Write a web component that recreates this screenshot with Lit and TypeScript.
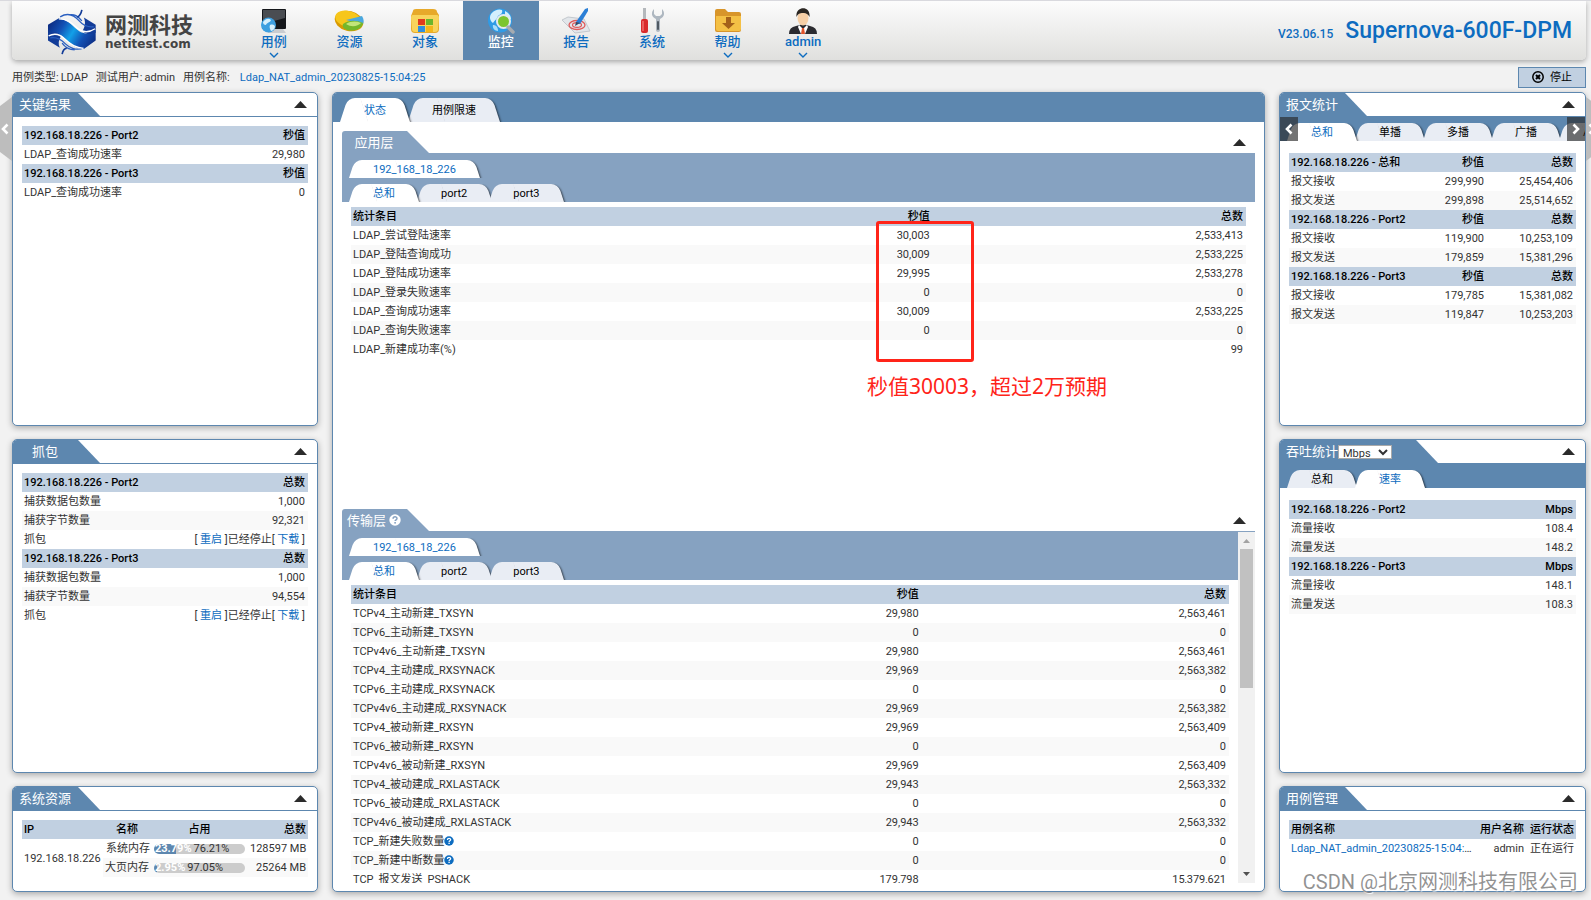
import { LitElement, html, svg, css, nothing, type TemplateResult } from "lit";
import { customElement, property } from "lit/decorators.js";
import { classMap } from "lit/directives/class-map.js";

const reset = css`
  *,
  *::before,
  *::after {
    box-sizing: border-box;
  }
  button {
    font: inherit;
    border: 0;
    margin: 0;
    padding: 0;
    background: none;
    cursor: pointer;
  }
  a {
    color: #0d6cc0;
    text-decoration: none;
  }
`;

/* ---------- icons ---------- */

const chevron = (d: string, w = 10, h = 6) =>
  html`<svg width=${w} height=${h} viewBox="0 0 ${w} ${h}" fill="none" stroke="currentColor" aria-hidden="true">
    ${svg`<path d=${d} stroke-width="1.4"/>`}
  </svg>`;

const arrowLeft = html`<svg width="8" height="12" viewBox="0 0 8 12" fill="none" aria-hidden="true">
  <path d="M6.5 1.5 2 6l4.500 4.500" stroke="#fff" stroke-width="2.600" />
</svg>`;
const arrowRight = html`<svg width="8" height="12" viewBox="0 0 8 12" fill="none" aria-hidden="true">
  <path d="M1.500 1.500 6 6l-4.500 4.500" stroke="#fff" stroke-width="2.600" />
</svg>`;

const help = (size: number, disc: string, mark: string) =>
  html`<svg width=${size} height=${size} viewBox="0 0 12 12" aria-hidden="true">
    <circle cx="6" cy="6" r="5.700" fill=${disc} />
    <path d="M4.100 4.700C4.100 2.200 8 2.300 8 4.500c0 1.300-1.900 1.300-1.900 2.600" fill="none" stroke=${mark} stroke-width="1.500" />
    <rect x="5.300" y="8" width="1.600" height="1.600" fill=${mark} />
  </svg>`;

const logo = html`<svg width="50" height="46" viewBox="140 25 152 138" aria-hidden="true">
  <defs>
    <linearGradient id="lg" x1="0" x2="1" y1="0.300" y2="0.700">
      <stop offset="0" stop-color="#0d2f86" />
      <stop offset="0.250" stop-color="#1250b4" />
      <stop offset="0.500" stop-color="#12a0e8" />
      <stop offset="0.750" stop-color="#1250b4" />
      <stop offset="1" stop-color="#0d2f86" />
    </linearGradient>
  </defs>
  <path d="M143 72 176 52C206 58 220 78 238 92c16 10 34 8 50-4v32l-36 26c-32-4-44-20-62-36-14-12-30-14-47 0z" fill="url(#lg)" />
  <path d="M252 50l36 22v24c-16 8-32 4-40-6 8-12 10-26 4-40zM143 98c18-8 32-2 40 8-8 12-10 24-4 36l-36-22z" fill="#123c98" />
  <path d="M180 48c26-16 44-4 58 12 10 12 22 20 44 18M206 42c18-4 28 4 40 18" fill="none" stroke="#2a5fc0" stroke-width="4" />
  <path d="M246 27c-2 10-4 18-14 22" fill="none" stroke="#123c98" stroke-width="5" />
  <path d="M150 112c20-4 34 6 46 18 12 12 34 22 56 12M186 128c10 14 22 20 38 20" fill="none" stroke="#2a5fc0" stroke-width="4" />
  <path d="M186 161c2-10 4-16 14-18" fill="none" stroke="#123c98" stroke-width="5" />
  <path d="M176 54c30 0 44 18 58 30 16 12 34 12 52 0" fill="none" stroke="#fff" stroke-width="4" />
  <path d="M145 106c22-12 38-2 50 10 16 16 34 26 56 28" fill="none" stroke="#fff" stroke-width="4" />
</svg>`;

const glyphs: Record<string, TemplateResult> = {
  case: svg`
    <rect x="3" y="1" width="24" height="20" rx="1" fill="#15171b"/>
    <path d="M4 2h22v8L4 16z" fill="#4a4d52"/>
    <path d="M11 21h13l3 4H9z" fill="#c9ccd0"/>
    <circle cx="9.500" cy="17" r="7.500" fill="#3d9fe0"/>
    <path d="M4 14c3-4 6-4 8-2-1 3-4 2-5 5-2 0-3-1-3-3zM11 17c3-1 5 0 5 2-1 3-3 4-4 4-1-2-2-4-1-6z" fill="#d6effc"/>`,
  resource: svg`
    <ellipse cx="15" cy="13" rx="14.500" ry="10" transform="rotate(14 15 13)" fill="#d99a00"/>
    <ellipse cx="14" cy="11" rx="13" ry="8" transform="rotate(14 14 11)" fill="#f7c61b"/>
    <path d="M12 12 28 8c2 3 2 6 1 8z" fill="#4aa8e0"/>
    <path d="M9 16c6-4 13-4 20-1-1 6-9 9-16 7-3-1-5-3-4-6z" fill="#74b72b"/>
    <path d="M12 16c5-3 10-3 15-1-3 3-9 5-15 1z" fill="#c3e57a"/>`,
  object: svg`
    <path d="M3 3q0-2 3-2h17q4 0 4 3l2 3v14q0 4-4 4H5q-4 0-4-4V8z" fill="#e7a92a"/>
    <path d="M3 7h24q2 0 2 3l-1 11q0 3-3 3H5q-3 0-3-3L1 10q0-3 2-3z" fill="#f8d45c"/>
    <rect x="8" y="11" width="7" height="6" fill="#e03a1e"/><rect x="16" y="11" width="7" height="6" fill="#6cb52c"/>
    <rect x="8" y="18" width="7" height="6" fill="#2f8fe0"/><rect x="16" y="18" width="7" height="6" fill="#f3b61c"/>`,
  monitor: svg`
    <circle cx="14" cy="12.500" r="12" fill="#2f9be6"/>
    <path d="M5 6c4-5 9-5 11-4 1 4-2 4-4 6-1 3-3 4-5 7-3-2-4-6-2-9zM19 3c4 2 6 5 6 8-3 0-5-2-6-4z" fill="#d4effd"/>
    <path d="M7 17c3 0 5 2 5 6-3 0-6-3-5-6z" fill="#a9dcf8"/>
    <circle cx="17.500" cy="13.500" r="6.500" fill="#7cc52f" stroke="#e4eaee" stroke-width="2"/>
    <path d="m22 19 5 5" stroke="#a7abb0" stroke-width="3.500" stroke-linecap="round"/>`,
  report: svg`
    <path d="M7 9 23 11 29 23 14 25 1 12z" fill="#e2e6ea" stroke="#c3c8ce"/>
    <ellipse cx="16" cy="17" rx="8" ry="4.500" fill="none" stroke="#e05a5a" stroke-width="1.300"/>
    <ellipse cx="16" cy="17" rx="4.500" ry="2.400" fill="none" stroke="#e05a5a" stroke-width="1.200"/>
    <path d="M15 14 24 1l3-1v3l-8 13z" fill="#2b7fd6"/>
    <path d="m15 14-1 4 5-3z" fill="#334a66"/>`,
  system: svg`
    <rect x="6" y="0" width="3" height="12" fill="#b4b8bc"/>
    <rect x="4" y="11" width="7" height="14" rx="2" fill="#d92a2c"/>
    <path d="M6 13v10" stroke="#f47a78" stroke-width="1.300"/>
    <path d="M17 1c-3 3-3 8 2 10v11q0 2 2 2t2-2V11c5-2 5-7 2-10v5l-2 2h-4l-2-2z" fill="#aeb7c0"/>
    <rect x="20" y="13" width="2" height="9" rx="1" fill="#4f5963"/>`,
  assist: svg`
    <path d="M2 3q0-2 2-2h8l3 3h11q2 0 2 2v16q0 2-2 2H4q-2 0-2-2z" fill="#d8952a"/>
    <path d="M3 8h25v13q0 2-2 2H5q-2 0-2-2z" fill="#f4c045"/>
    <path d="M13 9h5v6h4l-6.500 6L9 15h4z" fill="#a4611a"/>`,
  admin: svg`
    <path d="M1 26q0-7 7-8l7-2 7 2q7 1 7 8z" fill="#2b2b30"/>
    <path d="m11 17 4 4 4-4 1 2-3 7h-4l-3-7z" fill="#fff"/>
    <path d="M14 20h2l1 6h-4z" fill="#e0532a"/>
    <ellipse cx="15" cy="10" rx="5.500" ry="7.500" fill="#f6cfa6"/>
    <path d="M8.500 9C7-2 23-3 21.500 9 20 6 18 5 16 5c-3 0-6 0-7.500 4z" fill="#2a2622"/>`,
};

const navIcon = (name: string) =>
  html`<svg class="glyph" width="30" height="26" viewBox="0 0 30 26" aria-hidden="true">${glyphs[name]}</svg>`;

const collapseMark = html`<svg width="13" height="7" viewBox="0 0 13 7" aria-hidden="true">
  <path d="M0 7 6.500 0 13 7z" fill="#2b2b2b" />
</svg>`;

/* ---------- panel ---------- */

@customElement("dpm-panel")
export class DpmPanel extends LitElement {
  @property() heading = "";
  @property({ type: Boolean, reflect: true }) wide = false;

  static styles = [
    reset,
    css`
      :host {
        display: flex;
        flex-direction: column;
        min-height: 0;
        overflow: hidden;
        background: #fff;
        border: 1px solid #5d87af;
        border-radius: 5px;
        box-shadow: 0 2px 6px rgba(0, 0, 0, 0.3);
      }
      .bar {
        display: flex;
        flex: none;
        justify-content: space-between;
        align-items: center;
        height: 24px;
        border-bottom: 1px solid #5d87af;
      }
      .title {
        display: flex;
        align-items: center;
        justify-content: center;
        align-self: stretch;
        min-width: 87px;
        margin: 0;
        padding-right: 23px;
        color: #fff;
        background: #5d87af;
        font-size: 13px;
        font-weight: 400;
        clip-path: polygon(0 0, calc(100% - 22px) 0, 100% 100%, 0 100%);
      }
      :host([wide]) .title {
        padding: 0 46px 0 6px;
      }
      .toggle {
        display: flex;
        padding: 4px 10px;
      }
    `,
  ];

  render() {
    return html`
      <header class="bar">
        <h2 class="title">${this.heading}<slot name="extra"></slot></h2>
        <button class="toggle" aria-label="折叠">${collapseMark}</button>
      </header>
      <slot></slot>
    `;
  }
}

/* ---------- tabs ---------- */

@customElement("dpm-tabs")
export class DpmTabs extends LitElement {
  @property({ attribute: false }) tabs: string[] = [];
  @property({ type: Number }) active = 0;
  @property({ type: Boolean, reflect: true }) tall = false;

  static styles = [
    reset,
    css`
      :host {
        display: flex;
        align-items: flex-end;
        height: 24px;
        padding-left: 7px;
        overflow: hidden;
      }
      :host([tall]) {
        height: 29px;
      }
      .tab {
        position: relative;
        z-index: 0;
        flex: none;
        height: 18px;
        padding: 1px 24px 0;
        color: #000;
        line-height: 18px;
        white-space: nowrap;
      }
      :host([tall]) .tab {
        height: 24px;
        padding-top: 2px;
        line-height: 22px;
      }
      .tab + .tab {
        margin-left: -2px;
      }
      .tab::before,
      .tab::after {
        content: "";
        position: absolute;
        z-index: -1;
        top: 0;
        bottom: 0;
        background: #e9edf4;
      }
      .tab::before {
        left: 0;
        right: 40%;
        border-radius: 7px 0 0 0;
        transform: skewX(-18deg);
        transform-origin: 0 100%;
      }
      .tab::after {
        left: 40%;
        right: 0;
        border-radius: 0 7px 0 0;
        transform: skewX(18deg);
        transform-origin: 100% 100%;
        box-shadow: 1px 1px 2px rgba(0, 0, 0, 0.6);
        clip-path: inset(0 -6px 0 0);
      }
      .tab.active {
        z-index: 1;
        color: #0d6cc0;
      }
      .tab.active::before,
      .tab.active::after {
        background: #fff;
      }
    `,
  ];

  render() {
    return this.tabs.map(
      (t, i) => html`<button
        class=${classMap({ tab: true, active: i === this.active })}
        role="tab"
        aria-selected=${i === this.active}
      >${t}</button>`,
    );
  }
}

/* ---------- data ---------- */

type Row = string[];
interface Group {
  head: Row;
  rows: Row[];
}

const NAV = [
  { id: "case", label: "用例", menu: true },
  { id: "resource", label: "资源" },
  { id: "object", label: "对象" },
  { id: "monitor", label: "监控", active: true },
  { id: "report", label: "报告" },
  { id: "system", label: "系统" },
  { id: "assist", label: "帮助", menu: true },
  { id: "admin", label: "admin", menu: true },
];

const KEY_RESULTS: Group[] = [
  { head: ["192.168.18.226 - Port2", "秒值"], rows: [["LDAP_查询成功速率", "29,980"]] },
  { head: ["192.168.18.226 - Port3", "秒值"], rows: [["LDAP_查询成功速率", "0"]] },
];

const CAPTURE: Group[] = [
  { head: ["192.168.18.226 - Port2", "总数"], rows: [["捕获数据包数量", "1,000"], ["捕获字节数量", "92,321"], ["抓包", "@capture"]] },
  { head: ["192.168.18.226 - Port3", "总数"], rows: [["捕获数据包数量", "1,000"], ["捕获字节数量", "94,554"], ["抓包", "@capture"]] },
];

const APP_LAYER: Group[] = [
  {
    head: ["统计条目", "秒值", "总数"],
    rows: [
      ["LDAP_尝试登陆速率", "30,003", "2,533,413"],
      ["LDAP_登陆查询成功", "30,009", "2,533,225"],
      ["LDAP_登陆成功速率", "29,995", "2,533,278"],
      ["LDAP_登录失败速率", "0", "0"],
      ["LDAP_查询成功速率", "30,009", "2,533,225"],
      ["LDAP_查询失败速率", "0", "0"],
      ["LDAP_新建成功率(%)", "", "99"],
    ],
  },
];

const TRANSPORT: Group[] = [
  {
    head: ["统计条目", "秒值", "总数"],
    rows: [
      ["TCPv4_主动新建_TXSYN", "29,980", "2,563,461"],
      ["TCPv6_主动新建_TXSYN", "0", "0"],
      ["TCPv4v6_主动新建_TXSYN", "29,980", "2,563,461"],
      ["TCPv4_主动建成_RXSYNACK", "29,969", "2,563,382"],
      ["TCPv6_主动建成_RXSYNACK", "0", "0"],
      ["TCPv4v6_主动建成_RXSYNACK", "29,969", "2,563,382"],
      ["TCPv4_被动新建_RXSYN", "29,969", "2,563,409"],
      ["TCPv6_被动新建_RXSYN", "0", "0"],
      ["TCPv4v6_被动新建_RXSYN", "29,969", "2,563,409"],
      ["TCPv4_被动建成_RXLASTACK", "29,943", "2,563,332"],
      ["TCPv6_被动建成_RXLASTACK", "0", "0"],
      ["TCPv4v6_被动建成_RXLASTACK", "29,943", "2,563,332"],
      ["TCP_新建失败数量?", "0", "0"],
      ["TCP_新建中断数量?", "0", "0"],
      ["TCP_报文发送_PSHACK", "179,798", "15,379,621"],
    ],
  },
];

const PACKETS: Group[] = [
  { head: ["192.168.18.226 - 总和", "秒值", "总数"], rows: [["报文接收", "299,990", "25,454,406"], ["报文发送", "299,898", "25,514,652"]] },
  { head: ["192.168.18.226 - Port2", "秒值", "总数"], rows: [["报文接收", "119,900", "10,253,109"], ["报文发送", "179,859", "15,381,296"]] },
  { head: ["192.168.18.226 - Port3", "秒值", "总数"], rows: [["报文接收", "179,785", "15,381,082"], ["报文发送", "119,847", "10,253,203"]] },
];

const THROUGHPUT: Group[] = [
  { head: ["192.168.18.226 - Port2", "Mbps"], rows: [["流量接收", "108.4"], ["流量发送", "148.2"]] },
  { head: ["192.168.18.226 - Port3", "Mbps"], rows: [["流量接收", "148.1"], ["流量发送", "108.3"]] },
];

const MEMORY = [
  { name: "系统内存", used: 23.79, free: 76.21, total: "128597 MB" },
  { name: "大页内存", used: 2.95, free: 97.05, total: "25264 MB" },
];

/* ---------- application ---------- */

@customElement("app-root")
export class AppRoot extends LitElement {
  static styles = [
    reset,
    css`
      :host {
        display: flex;
        flex-direction: column;
        position: relative;
        height: 100vh;
        min-height: 640px;
        padding: 0 5px 8px 12px;
        overflow: hidden;
        background: #f2f2f2;
        border-top: 1px solid #d9d9de;
        box-sizing: border-box;
        color: #333;
        font: 11px/19px Roboto, "Noto Sans CJK SC", sans-serif;
      }

      /* top bar */
      .top {
        display: flex;
        flex: none;
        align-items: stretch;
        height: 59px;
        padding-right: 14px;
        background: linear-gradient(#fcfcfc, #e0e0de);
        border-radius: 0 0 5px 5px;
        box-shadow: 0 2px 5px rgba(0, 0, 0, 0.3);
      }
      .brand {
        display: flex;
        align-items: center;
        gap: 8px;
        width: 224px;
        padding: 2px 0 0 35px;
        color: #444;
      }
      .brand-text {
        display: flex;
        flex-direction: column;
      }
      .brand-cn {
        font-size: 22px;
        font-weight: 700;
        line-height: 24px;
      }
      .brand-en {
        font: 700 12px/12px "DejaVu Sans", sans-serif;
      }
      .nav {
        display: grid;
        grid-template-columns: repeat(8, 1fr);
        width: 605px;
      }
      .nav-item {
        display: flex;
        flex-direction: column;
        align-items: center;
        padding-top: 7px;
        color: #0d6cc0;
        font-size: 13px;
        font-weight: 500;
        line-height: 16px;
      }
      .nav-item.active {
        color: #fff;
        background: #5d87af;
      }
      .nav-item svg {
        flex: none;
      }
      .nav-item .glyph + span + svg {
        margin-top: 2px;
      }
      .product {
        display: flex;
        align-items: baseline;
        gap: 12px;
        margin-left: auto;
        padding-top: 16px;
        color: #0d6cc0;
        font-weight: 500;
      }
      .version {
        font-size: 12px;
      }
      .model {
        font-size: 23px;
        line-height: 28px;
      }

      /* info line */
      .info {
        display: flex;
        flex: none;
        align-items: center;
        height: 32px;
        padding-top: 2px;
        white-space: nowrap;
      }
      .info dl {
        display: flex;
        margin: 0;
      }
      .info dt {
        margin-right: 2px;
      }
      .info dd {
        margin: 0 8px 0 0;
      }
      .info .name {
        margin-left: 8px;
      }
      .stop {
        display: flex;
        align-items: center;
        justify-content: center;
        gap: 6px;
        width: 68px;
        height: 21px;
        margin-left: auto;
        color: #000;
        background: #c1d0e1;
        border: 1px solid #5d87af;
      }

      /* columns */
      .main {
        display: grid;
        flex: 1;
        grid-template-columns: 306px minmax(0, 1fr) 307px;
        gap: 14px;
        min-height: 0;
      }
      .side {
        display: grid;
        grid-template-rows: minmax(0, 1fr) minmax(0, 1fr) 106px;
        gap: 13px;
        min-height: 0;
      }
      .body {
        padding: 9px 9px 0;
      }
      .body.tabbed {
        padding-top: 12px;
      }

      /* tables */
      table {
        width: 100%;
        border-collapse: collapse;
        table-layout: fixed;
      }
      th,
      td {
        height: 19px;
        padding: 0 3px;
        line-height: 19px;
        text-align: right;
        white-space: nowrap;
        overflow: hidden;
        text-overflow: ellipsis;
      }
      th {
        color: #000;
        font-weight: 500;
        background: #c1d0e1;
      }
      th:first-child,
      td:first-child {
        padding-left: 2px;
        text-align: left;
      }
      .even td {
        background: #f9f9f9;
      }
      .label {
        width: 50%;
      }
      .packets .label {
        width: 51%;
      }
      .packets .last {
        width: 31%;
      }
      .stats .last {
        width: 35%;
      }
      td svg {
        vertical-align: middle;
        margin-bottom: 2px;
      }

      .memory .ip {
        width: 81px;
      }
      .memory .kind {
        width: 48px;
        text-align: center;
      }
      .memory .use {
        width: 97px;
        text-align: center;
      }
      .memory th.total,
      .memory td.total {
        padding: 0 2px;
        text-align: right;
      }
      .memory td.even-cell {
        background: #f9f9f9;
      }
      .memory td {
        overflow: visible;
      }
      .meter {
        display: flex;
        gap: 2px;
        height: 10px;
        padding-left: 1px;
        line-height: 10px;
        border-radius: 5px;
        background: linear-gradient(90deg, #5d87af var(--used), #ccc var(--used));
      }
      .meter b {
        color: #fff;
      }
      .cases th,
      .cases td {
        padding: 0 2px;
      }
      .cases .user,
      .cases .state {
        width: 50px;
      }

      .tab-strip {
        position: relative;
        flex: none;
        background: #5d87af;
      }
      .scroll-tab {
        position: absolute;
        z-index: 2;
        top: 0;
        display: flex;
        align-items: center;
        justify-content: center;
        width: 18px;
        height: 24px;
        background: rgba(40, 40, 40, 0.65);
      }
      .scroll-tab.prev {
        left: 0;
      }
      .scroll-tab.next {
        right: 0;
      }

      .unit {
        width: 54px;
        height: 14px;
        padding: 0;
        color: #333;
        background: #fff;
        border: 1px solid #aaa;
        border-radius: 0;
        font: 11px/12px Roboto, sans-serif;
      }

      /* centre */
      .centre {
        display: flex;
        flex-direction: column;
        min-height: 0;
        overflow: hidden;
        background: #fff;
        border: 1px solid #5d87af;
        border-radius: 5px;
        box-shadow: 0 2px 6px rgba(0, 0, 0, 0.3);
      }
      .layers {
        display: grid;
        flex: 1;
        grid-template-rows: minmax(0, 1fr) minmax(0, 1fr);
        gap: 4px;
        min-height: 0;
        padding: 9px 9px 8px;
      }
      .layer {
        position: relative;
        display: flex;
        flex-direction: column;
        min-height: 0;
      }
      .layer-bar {
        display: flex;
        flex: none;
        justify-content: space-between;
        align-items: center;
        height: 23px;
        border-bottom: 1px solid #86a2c1;
      }
      .layer-title {
        display: flex;
        align-items: center;
        justify-content: center;
        gap: 3px;
        align-self: stretch;
        min-width: 87px;
        margin: 0;
        padding-right: 23px;
        color: #fff;
        background: #86a2c1;
        border-radius: 3px 0 0 0;
        font-size: 13px;
        font-weight: 400;
        clip-path: polygon(0 0, calc(100% - 22px) 0, 100% 100%, 0 100%);
      }
      .toggle {
        display: flex;
        padding: 4px 9px;
      }
      .layer-tabs {
        background: #86a2c1;
      }
      .layer-body {
        padding: 5px 9px 0;
      }
      .scroller {
        display: flex;
        flex: 1;
        min-height: 0;
      }
      .content {
        flex: 1;
        min-width: 0;
        overflow: hidden;
      }
      .scrollbar {
        display: flex;
        flex: none;
        flex-direction: column;
        align-items: center;
        width: 17px;
        background: #f1f1f1;
      }
      .scrollbar svg {
        flex: none;
      }
      .track {
        flex: 1;
        width: 13px;
      }
      .thumb {
        height: 44%;
        background: #c1c1c1;
      }

      /* marks laid over the page */
      .mark {
        position: absolute;
        top: 90px;
        left: 58.5%;
        width: 98px;
        height: 141px;
        border: 3px solid #ff2419;
        border-radius: 3px;
        pointer-events: none;
      }
      .note {
        position: absolute;
        top: 240px;
        left: 57.5%;
        margin: 0;
        color: #ff2419;
        font: 21px/30px "Noto Sans", "Noto Sans CJK SC", sans-serif;
        white-space: nowrap;
      }
      .watermark {
        position: absolute;
        right: 13px;
        bottom: 4px;
        color: rgba(110, 110, 110, 0.75);
        font: 20px/28px Roboto, "Noto Sans CJK SC", sans-serif;
        text-shadow: 1px 1px 1px #fff;
        pointer-events: none;
      }
      .drawer {
        position: absolute;
        top: 96px;
        display: flex;
        align-items: center;
        width: 12px;
        height: 64px;
        background: #bdbdbd;
      }
      .drawer.left {
        left: 0;
        padding-left: 1px;
        clip-path: polygon(0 9px, 100% 0, 100% 100%, 0 calc(100% - 9px));
      }
      .drawer.right {
        right: -7px;
        padding-left: 2px;
        clip-path: polygon(0 0, 100% 9px, 100% calc(100% - 9px), 0 100%);
      }
    `,
  ];

  private cell(text: string) {
    if (text === "@capture") {
      return html`[ <a href="#restart">重启</a> ]已经停止[ <a href="#download">下载</a> ]`;
    }
    if (text.endsWith("?")) {
      return html`${text.slice(0, -1)}${help(10, "#0d6cc0", "#fff")}`;
    }
    return text;
  }

  private table(groups: Group[], kind = "") {
    const last = groups[0].head.length - 1;
    return html`<table class=${kind}>
      ${groups.map(
        (g) => html`<tbody>
          <tr>
            ${g.head.map((h, i) => html`<th class=${i === 0 ? "label" : i === last ? "last" : ""}>${h}</th>`)}
          </tr>
          ${g.rows.map(
            (r, n) => html`<tr class=${n % 2 ? "even" : ""}>
              ${r.map((c) => html`<td>${this.cell(c)}</td>`)}
            </tr>`,
          )}
        </tbody>`,
      )}
    </table>`;
  }

  private layerBar(title: string, hint = false) {
    return html`<header class="layer-bar">
      <h3 class="layer-title">${title}${hint ? help(12, "#fff", "#86a2c1") : nothing}</h3>
      <button class="toggle" aria-label="折叠">${collapseMark}</button>
    </header>`;
  }

  private layerTabs() {
    return html`<div class="layer-tabs">
      <dpm-tabs .tabs=${["192_168_18_226"]}></dpm-tabs>
      <dpm-tabs .tabs=${["总和", "port2", "port3"]}></dpm-tabs>
    </div>`;
  }

  render() {
    return html`
      <header class="top">
        <div class="brand">
          ${logo}
          <div class="brand-text">
            <span class="brand-cn">网测科技</span>
            <span class="brand-en">netitest.com</span>
          </div>
        </div>
        <nav class="nav">
          ${NAV.map(
            (n) => html`<a class=${classMap({ "nav-item": true, active: !!n.active })} href="#${n.id}"
              >${navIcon(n.id)}<span>${n.label}</span>${n.menu ? chevron("M1 1l4 4 4-4") : nothing}</a
            >`,
          )}
        </nav>
        <div class="product">
          <span class="version">V23.06.15</span>
          <span class="model">Supernova-600F-DPM</span>
        </div>
      </header>

      <div class="info">
        <dl>
          <dt>用例类型:</dt><dd>LDAP</dd>
          <dt>测试用户:</dt><dd>admin</dd>
          <dt>用例名称:</dt><dd class="name"><a href="#case">Ldap_NAT_admin_20230825-15:04:25</a></dd>
        </dl>
        <button class="stop">
          <svg width="12" height="12" viewBox="0 0 12 12" fill="none" stroke="#000" aria-hidden="true">
            <circle cx="6" cy="6" r="5.200" stroke-width="1.500" />
            <path d="m4 4 4 4M8 4 4 8" stroke-width="2" />
          </svg>
          停止
        </button>
      </div>

      <main class="main">
        <div class="side">
          <dpm-panel heading="关键结果"><div class="body">${this.table(KEY_RESULTS)}</div></dpm-panel>
          <dpm-panel heading="抓包"><div class="body">${this.table(CAPTURE)}</div></dpm-panel>
          <dpm-panel heading="系统资源">
            <div class="body">
              <table class="memory">
                <tr><th class="ip">IP</th><th class="kind">名称</th><th class="use">占用</th><th class="total">总数</th></tr>
                ${MEMORY.map(
                  (m, i) => html`<tr>
                    ${i === 0 ? html`<td class="ip" rowspan="2">192.168.18.226</td>` : nothing}
                    <td class=${classMap({ kind: true, "even-cell": i === 1 })}>${m.name}</td>
                    <td class=${classMap({ use: true, "even-cell": i === 1 })}>
                      <div class="meter" style="--used:${m.used}%"><b>${m.used}%</b><span>${m.free}%</span></div>
                    </td>
                    <td class=${classMap({ total: true, "even-cell": i === 1 })}>${m.total}</td>
                  </tr>`,
                )}
              </table>
            </div>
          </dpm-panel>
        </div>

        <section class="centre">
          <div class="tab-strip"><dpm-tabs tall .tabs=${["状态", "用例限速"]}></dpm-tabs></div>
          <div class="layers">
            <section class="layer">
              ${this.layerBar("应用层")} ${this.layerTabs()}
              <div class="layer-body">${this.table(APP_LAYER, "stats")}</div>
              <div class="mark"></div>
              <p class="note">秒值30003，超过2万预期</p>
            </section>
            <section class="layer">
              ${this.layerBar("传输层", true)}
              <div class="scroller">
                <div class="content">
                  ${this.layerTabs()}
                  <div class="layer-body">${this.table(TRANSPORT, "stats")}</div>
                </div>
                <div class="scrollbar">
                  <svg width="17" height="17" viewBox="0 0 17 17" aria-hidden="true"><path d="M5 11 8.500 7 12 11z" fill="#a3a3a3" /></svg>
                  <div class="track"><div class="thumb"></div></div>
                  <svg width="17" height="17" viewBox="0 0 17 17" aria-hidden="true"><path d="M5 6 8.500 10 12 6z" fill="#505050" /></svg>
                </div>
              </div>
            </section>
          </div>
        </section>

        <div class="side">
          <dpm-panel heading="报文统计">
            <div class="tab-strip">
              <button class="scroll-tab prev" aria-label="向左">${arrowLeft}</button>
              <dpm-tabs .tabs=${["总和", "单播", "多播", "广播", "ARP"]}></dpm-tabs>
              <button class="scroll-tab next" aria-label="向右">${arrowRight}</button>
            </div>
            <div class="body tabbed">${this.table(PACKETS, "packets")}</div>
          </dpm-panel>
          <dpm-panel heading="吞吐统计" wide>
            <select class="unit" slot="extra" aria-label="单位"><option>Mbps</option><option>Kbps</option></select>
            <div class="tab-strip"><dpm-tabs .tabs=${["总和", "速率"]} .active=${1}></dpm-tabs></div>
            <div class="body tabbed">${this.table(THROUGHPUT)}</div>
          </dpm-panel>
          <dpm-panel heading="用例管理">
            <div class="body">
              <table class="cases">
                <tr><th>用例名称</th><th class="user">用户名称</th><th class="state">运行状态</th></tr>
                <tr><td><a href="#case">Ldap_NAT_admin_20230825-15:04:25</a></td><td>admin</td><td>正在运行</td></tr>
              </table>
            </div>
          </dpm-panel>
        </div>
      </main>

      <button class="drawer left" aria-label="上一页">${arrowLeft}</button>
      <button class="drawer right" aria-label="下一页">${arrowRight}</button>
      <div class="watermark">CSDN @北京网测科技有限公司</div>
    `;
  }
}
